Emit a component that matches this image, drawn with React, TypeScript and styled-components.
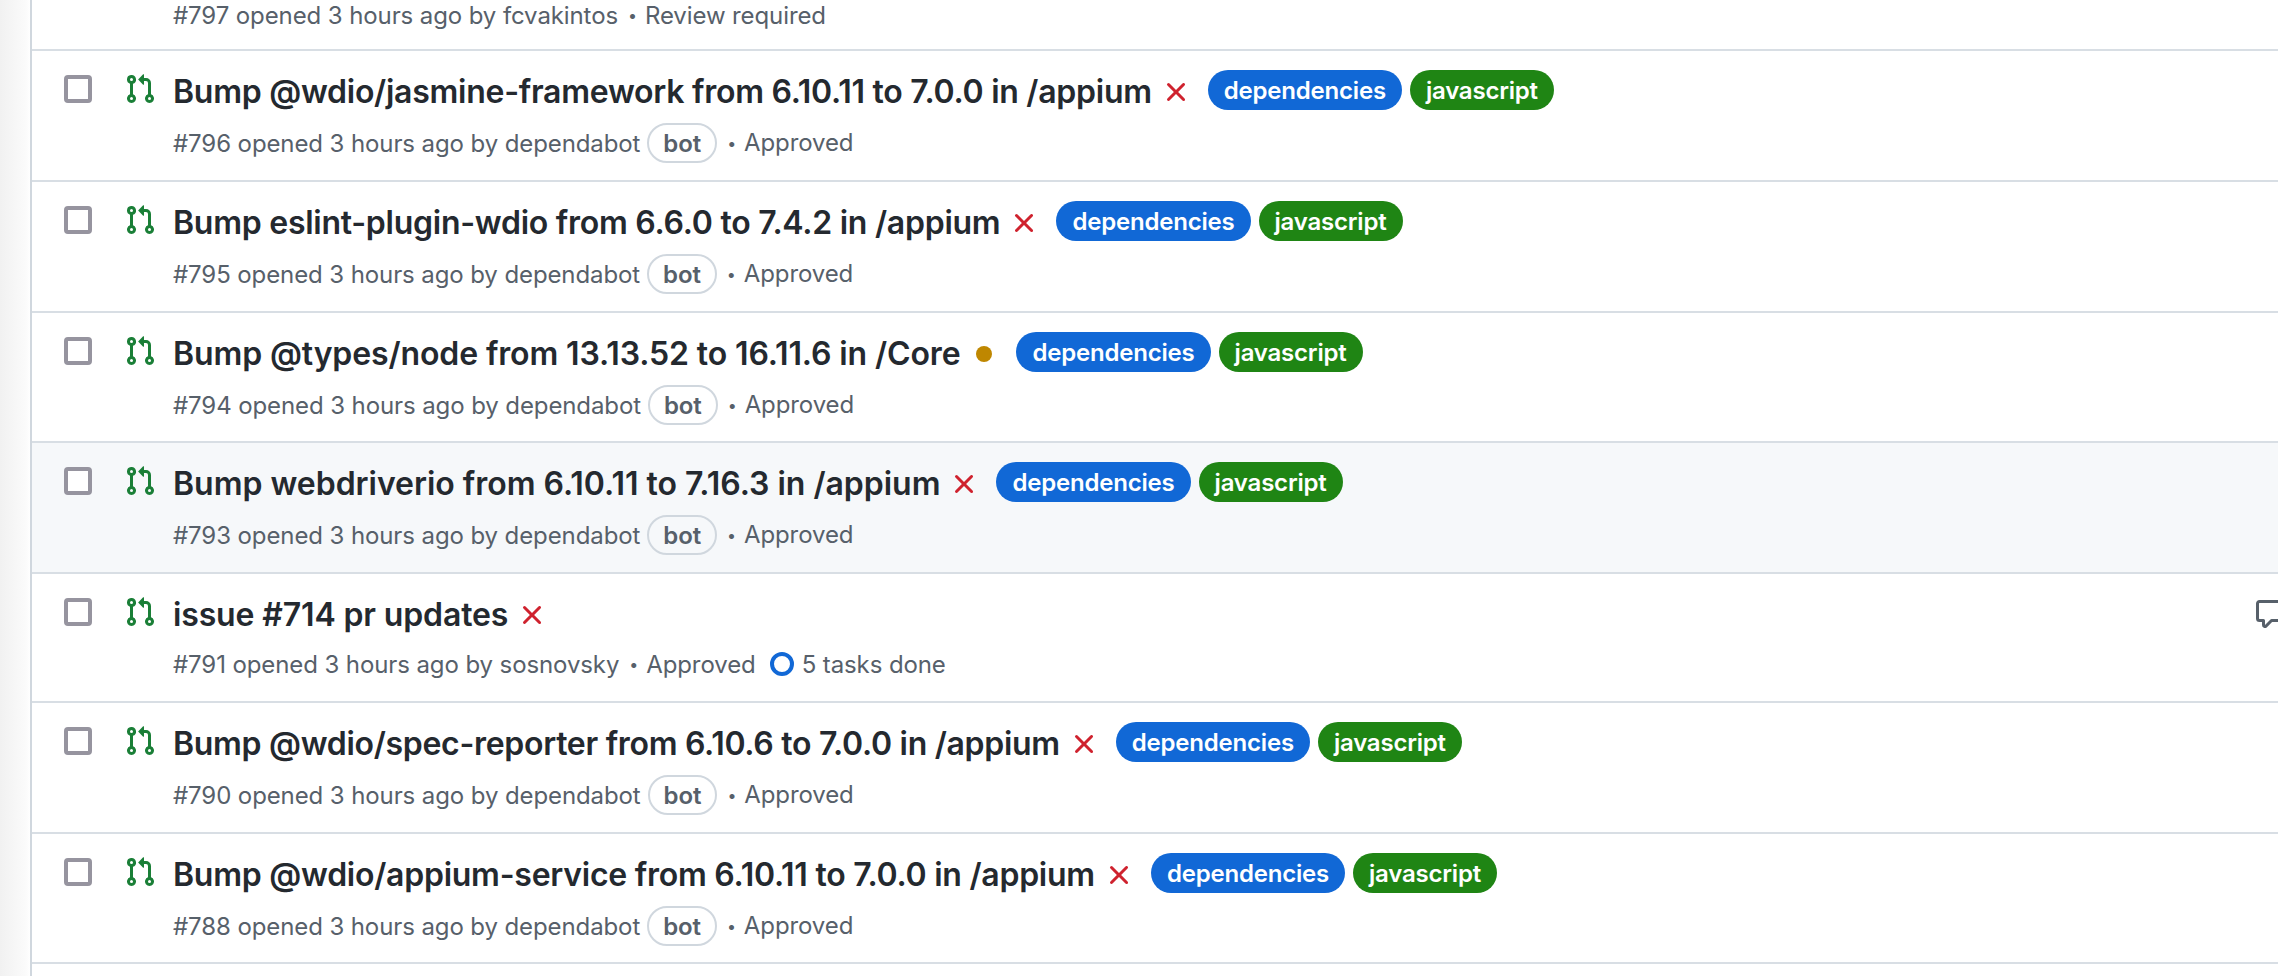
import styled, { createGlobalStyle } from "styled-components";

const GlobalStyle = createGlobalStyle`
  html, body {
    margin: 0;
    padding: 0;
    background: #fff;
    overflow: hidden;
  }
  body {
    font-family: Inter, "Liberation Sans", sans-serif;
  }
`;

// ------------------------------------- STYLES -------------------------------------

const Page = styled.div`
  width: 2278px;
  height: 976px;
  overflow: hidden;
  padding-left: 30px;
  box-sizing: border-box;
  background: linear-gradient(90deg, #f1f1f1 0, #fbfbfb 26px, #fff 30px);
`;

const List = styled.div`
  width: 2290px;
  min-height: 976px;
  background: #fff;
  border-left: 2px solid #d0d7de;
`;

const Row = styled.div<{ $height: number; $hover?: boolean }>`
  display: flex;
  box-sizing: border-box;
  height: ${(p) => p.$height}px;
  padding: 24px 0 0 32px;
  background: ${(p) => (p.$hover ? "#f6f8fa" : "#fff")};
  border-bottom: 2px solid #d8dee4;
`;

const TopRow = styled.div`
  box-sizing: border-box;
  height: 51px;
  padding-left: 141px;
  border-bottom: 2px solid #d8dee4;
`;

const Check = styled.span`
  flex: none;
  box-sizing: border-box;
  width: 28px;
  height: 28px;
  border: 4px solid #96949f;
  border-radius: 4px;
  background: #fff;
`;

const StateIcon = styled.svg`
  flex: none;
  width: 32px;
  height: 32px;
  margin: -2px 17px 0 32px;
  fill: #1a7f37;
`;

const Body = styled.div`
  flex: 1;
  min-width: 0;
  margin-top: -5px;
`;

const TitleLine = styled.div`
  display: flex;
  align-items: center;
  height: 40px;
`;

const Title = styled.span<{ $tracking: number }>`
  font-size: 32px;
  line-height: 40px;
  font-weight: 600;
  letter-spacing: ${(p) => p.$tracking}px;
  color: #24292f;
  margin-top: 4px;
  white-space: nowrap;
`;

const StatusIcon = styled.svg<{ $color: string }>`
  flex: none;
  width: 32px;
  height: 32px;
  margin: 4px 8px 0 8px;
  fill: ${(p) => p.$color};
`;

const Label = styled.span<{ $bg: string }>`
  flex: none;
  display: inline-flex;
  align-items: center;
  height: 40px;
  padding: 0 16px;
  margin-left: 8px;
  border-radius: 20px;
  font-size: 24px;
  font-weight: 600;
  letter-spacing: -0.2px;
  color: #fff;
  background: ${(p) => p.$bg};
  & + & {
    margin-left: 8px;
  }
`;

const Meta = styled.div`
  display: flex;
  align-items: center;
  height: 40px;
  margin-top: 13px;
  font-size: 24px;
  letter-spacing: -0.1px;
  color: #57606a;
  white-space: nowrap;
`;

const TaskMeta = styled(Meta)`
  margin-top: 11px;
`;

const TopMeta = styled(Meta)`
  height: 30px;
  margin-top: 0;
`;

const BotBadge = styled.span`
  display: inline-flex;
  align-items: center;
  box-sizing: border-box;
  height: 40px;
  padding: 0 14px;
  margin-left: 7px;
  border: 2px solid #d0d7de;
  border-radius: 20px;
  font-weight: 600;
`;

const Bullet = styled.span`
  font-size: 16px;
  margin: 0 8px 0 10px;
`;

const Review = styled.span`
  position: relative;
  top: -1px;
`;

const TaskRing = styled.span`
  box-sizing: border-box;
  width: 24px;
  height: 24px;
  margin: 0 8px 0 14px;
  border: 4px solid #1168d6;
  border-radius: 50%;
`;

const CommentIcon = styled.svg`
  flex: none;
  width: 32px;
  height: 32px;
  margin: 0 36px 0 0;
  fill: #57606a;
`;

// ------------------------------------- DATA -------------------------------------

const prPath =
  "M1.5 3.25a2.25 2.25 0 1 1 3 2.122v5.256a2.251 2.251 0 1 1-1.5 0V5.372A2.25 2.25 0 0 1 1.5 3.25Zm5.677-.177L9.573.677A.25.25 0 0 1 10 .854V2.5h1A2.5 2.5 0 0 1 13.5 5v5.628a2.251 2.251 0 1 1-1.5 0V5a1 1 0 0 0-1-1h-1v1.646a.25.25 0 0 1-.427.177L7.177 3.427a.25.25 0 0 1 0-.354ZM3.75 2.5a.75.75 0 1 0 0 1.5.75.75 0 0 0 0-1.5Zm0 9.5a.75.75 0 1 0 0 1.5.75.75 0 0 0 0-1.5Zm8.25.75a.75.75 0 1 0 1.5 0 .75.75 0 0 0-1.5 0Z";
const xPath =
  "M3.72 3.72a.75.75 0 0 1 1.06 0L8 6.94l3.22-3.22a.749.749 0 0 1 1.275.326.749.749 0 0 1-.215.734L9.06 8l3.22 3.22a.749.749 0 0 1-.326 1.275.749.749 0 0 1-.734-.215L8 9.06l-3.22 3.22a.751.751 0 0 1-1.042-.018.751.751 0 0 1-.018-1.042L6.94 8 3.72 4.78a.75.75 0 0 1 0-1.06Z";
const commentPath =
  "M1 2.75C1 1.784 1.784 1 2.75 1h10.5c.966 0 1.75.784 1.75 1.75v7.5A1.75 1.75 0 0 1 13.25 12H9.06l-2.573 2.573A1.458 1.458 0 0 1 4 13.543V12H2.75A1.75 1.75 0 0 1 1 10.25Zm1.75-.25a.25.25 0 0 0-.25.25v7.5c0 .138.112.25.25.25h2a.75.75 0 0 1 .75.75v2.19l2.72-2.72a.749.749 0 0 1 .53-.22h4.5a.25.25 0 0 0 .25-.25v-7.5a.25.25 0 0 0-.25-.25Z";

type Pull = {
  id: number;
  title: string;
  height: number;
  tracking: number;
  author?: string;
  pending?: boolean;
  hover?: boolean;
};

const pulls: Pull[] = [
  { id: 796, height: 131, tracking: -0.26, title: "Bump @wdio/jasmine-framework from 6.10.11 to 7.0.0 in /appium" },
  { id: 795, height: 131, tracking: -0.26, title: "Bump eslint-plugin-wdio from 6.6.0 to 7.4.2 in /appium" },
  { id: 794, height: 130, tracking: -0.12, title: "Bump @types/node from 13.13.52 to 16.11.6 in /Core", pending: true },
  { id: 793, height: 131, tracking: -0.02, title: "Bump webdriverio from 6.10.11 to 7.16.3 in /appium", hover: true },
  { id: 791, height: 129, tracking: -0.14, title: "issue #714 pr updates", author: "sosnovsky" },
  { id: 790, height: 131, tracking: -0.3, title: "Bump @wdio/spec-reporter from 6.10.6 to 7.0.0 in /appium" },
  { id: 788, height: 130, tracking: -0.25, title: "Bump @wdio/appium-service from 6.10.11 to 7.0.0 in /appium" },
];

// ------------------------------------- COMPONENT -------------------------------------

const App = () => {
  return (
    <Page>
      <GlobalStyle />
      <List>
        <TopRow>
          <TopMeta>
            #797 opened 3 hours ago by fcvakintos
            <Bullet>•</Bullet>
            Review required
          </TopMeta>
        </TopRow>

        {pulls.map((pull) => (
          <Row key={pull.id} $height={pull.height} $hover={pull.hover}>
            <Check />
            <StateIcon viewBox="0 0 16 16">
              <path d={prPath} />
            </StateIcon>
            <Body>
              <TitleLine>
                <Title $tracking={pull.tracking}>{pull.title}</Title>
                {pull.pending ? (
                  <StatusIcon viewBox="0 0 16 16" $color="#bf8700">
                    <circle cx="8" cy="8" r="4" />
                  </StatusIcon>
                ) : (
                  <StatusIcon viewBox="0 0 16 16" $color="#cf222e">
                    <path d={xPath} />
                  </StatusIcon>
                )}
                {!pull.author && (
                  <>
                    <Label $bg="#1168d6">dependencies</Label>
                    <Label $bg="#1f8514">javascript</Label>
                  </>
                )}
              </TitleLine>
              {pull.author ? (
                <TaskMeta>
                  #{pull.id} opened 3 hours ago by {pull.author}
                  <Bullet>•</Bullet>
                  Approved
                  <TaskRing />5 tasks done
                </TaskMeta>
              ) : (
                <Meta>
                  #{pull.id} opened 3 hours ago by dependabot
                  <BotBadge>bot</BotBadge>
                  <Bullet>•</Bullet>
                  <Review>Approved</Review>
                </Meta>
              )}
            </Body>
            {pull.author && (
              <CommentIcon viewBox="0 0 16 16">
                <path d={commentPath} />
              </CommentIcon>
            )}
          </Row>
        ))}
      </List>
    </Page>
  );
};

export default App;
